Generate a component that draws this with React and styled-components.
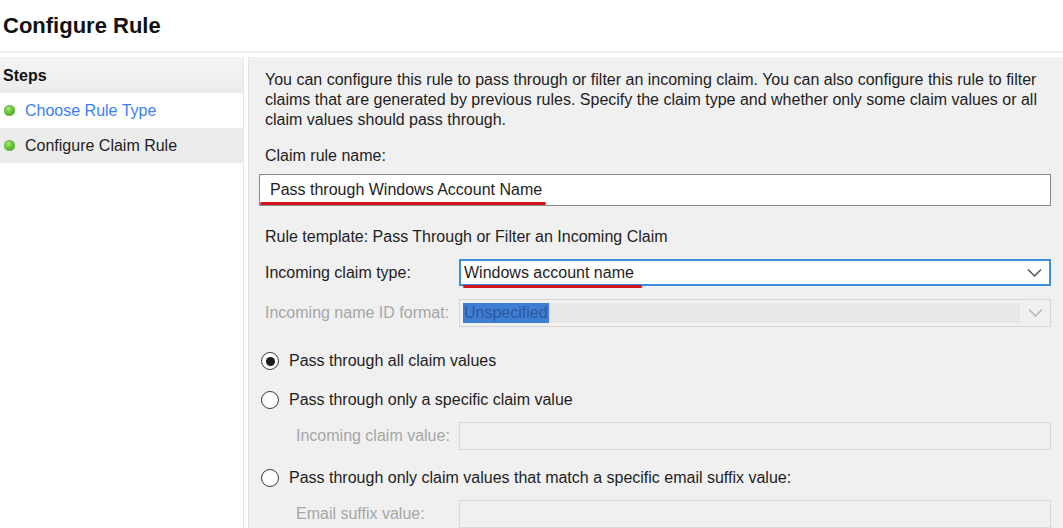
import React from "react";
import styled, { createGlobalStyle } from "styled-components";

const GlobalStyle = createGlobalStyle`
  html, body {
    margin: 0;
    padding: 0;
    background: #ffffff;
  }
  body {
    font-family: "Liberation Sans", Arial, sans-serif;
    font-size: 16px;
    color: #1e1e1e;
  }
`;

const Page = styled.div`
  width: 1063px;
  height: 528px;
  overflow: hidden;
  background: #fff;
  display: flex;
  flex-direction: column;
`;

const Header = styled.div`
  height: 53px;
  display: flex;
  align-items: center;
  padding-left: 3px;
  box-sizing: border-box;
  border-bottom: 2px solid #ececec;
`;

const Title = styled.h1`
  margin: 0;
  font-size: 22px;
  font-weight: bold;
  color: #111;
`;

const Body = styled.div`
  flex: 1;
  display: flex;
  gap: 4px;
  padding-top: 4px;
`;

const Sidebar = styled.div`
  width: 243px;
  border-right: 1px solid #e6e6e6;
  border-top: 1px solid #f2f2f2;
  display: flex;
  flex-direction: column;
`;

const StepsHeader = styled.div`
  height: 35px;
  display: flex;
  align-items: center;
  padding-left: 3px;
  font-weight: bold;
  color: #111;
  background: linear-gradient(#f4f4f4, #ececec);
`;

const StepItem = styled.div`
  height: 35px;
  display: flex;
  align-items: center;
  gap: 10px;
  padding-left: 4px;
  background: ${(p) => (p.$current ? "#ececec" : "#ffffff")};
  color: ${(p) => (p.$link ? "#3a7ff0" : "#1e1e1e")};
`;

const Dot = styled.span`
  width: 11px;
  height: 11px;
  border-radius: 50%;
  background: radial-gradient(circle at 40% 35%, #a6ec74 0%, #55b82c 55%, #3b8f1f 100%);
  box-shadow: 0 0 0 1px #78bf55 inset;
`;

const Main = styled.div`
  flex: 1;
  background: #f0f0f0;
  border-left: 1px solid #e2e2e2;
  padding: 13px 12px 0 10px;
  display: flex;
  flex-direction: column;
  line-height: 20px;
`;

const Text = styled.div`
  padding-left: 6px;
  margin-top: ${(p) => p.$mt || 0}px;
  color: ${(p) => (p.$muted ? "#a6a6a6" : "#1e1e1e")};
`;

const Underlined = styled.span`
  position: relative;
  &::after {
    content: "";
    position: absolute;
    left: ${(p) => p.$left || 0}px;
    right: ${(p) => p.$right || 0}px;
    bottom: -5px;
    height: 3px;
    border-radius: 2px;
    background: #d3131b;
  }
`;

const TextInput = styled.div`
  margin-top: ${(p) => p.$mt || 0}px;
  height: 28px;
  box-sizing: border-box;
  border: 1px solid ${(p) => (p.$disabled ? "#d9d9d9" : "#8a8a8a")};
  background: ${(p) => (p.$disabled ? "#f0f0f0" : "#ffffff")};
  display: flex;
  align-items: center;
  padding-left: 10px;
  flex: 1;
`;

const Row = styled.div`
  margin-top: ${(p) => p.$mt || 0}px;
  display: flex;
  align-items: center;
`;

const RowLabel = styled.div`
  width: ${(p) => (p.$indent ? 163 : 194)}px;
  padding-left: ${(p) => (p.$indent ? 37 : 6)}px;
  flex-shrink: 0;
  color: ${(p) => (p.$muted ? "#a6a6a6" : "#1e1e1e")};
`;

const Select = styled.div`
  flex: 1;
  height: ${(p) => (p.$disabled ? 28 : 27)}px;
  box-sizing: border-box;
  border: ${(p) => (p.$disabled ? "1px solid #d6d6d6" : "2px solid #3c8fd8")};
  background: ${(p) => (p.$disabled ? "#f0f0f0" : "#ffffff")};
  display: flex;
  align-items: center;
  padding-left: 3px;
  padding-right: 7px;
`;

const SelectValue = styled.div`
  flex: 1;
  display: flex;
  align-items: center;
  height: 100%;
  margin-right: 8px;
  box-sizing: border-box;
  ${(p) =>
    p.$disabled &&
    `
    height: 20px;
    background: #e8e8e8;
  `}
`;

const Highlight = styled.span`
  background: #3f7fd3;
  color: #2e58a0;
  padding: 0 1px;
  line-height: 20px;
`;

const Chevron = ({ color }) => (
  <svg width="15" height="10" viewBox="0 0 15 10" fill="none">
    <path d="M1 1.5 L7.5 8 L14 1.5" stroke={color} strokeWidth="1.5" />
  </svg>
);

const RadioRow = styled.label`
  margin-top: ${(p) => p.$mt || 0}px;
  display: flex;
  align-items: center;
  gap: 10px;
  padding-left: 2px;
`;

const RadioCircle = styled.span`
  width: 18px;
  height: 18px;
  box-sizing: border-box;
  border-radius: 50%;
  border: 1.5px solid #3a3a3a;
  background: #fff;
  display: flex;
  align-items: center;
  justify-content: center;
  &::after {
    content: "";
    width: 9px;
    height: 9px;
    border-radius: 50%;
    background: ${(p) => (p.$checked ? "#1a1a1a" : "transparent")};
  }
`;

export default function App() {
  return (
    <Page>
      <GlobalStyle />
      <Header>
        <Title>Configure Rule</Title>
      </Header>
      <Body>
        <Sidebar>
          <StepsHeader>Steps</StepsHeader>
          <StepItem $link>
            <Dot />
            Choose Rule Type
          </StepItem>
          <StepItem $current>
            <Dot />
            Configure Claim Rule
          </StepItem>
        </Sidebar>
        <Main>
          <Text>
            You can configure this rule to pass through or filter an incoming claim. You can also configure this rule to filter
            <br />
            claims that are generated by previous rules. Specify the claim type and whether only some claim values or all
            <br />
            claim values should pass through.
          </Text>
          <Text $mt={16}>Claim rule name:</Text>
          <TextInput $mt={8}>
            <Underlined $left={-10} $right={-4}>
              Pass through Windows Account Name
            </Underlined>
          </TextInput>
          <Text $mt={21}>Rule template: Pass Through or Filter an Incoming Claim</Text>
          <Row $mt={12}>
            <RowLabel>Incoming claim type:</RowLabel>
            <Select>
              <SelectValue>
                <Underlined $left={-1} $right={-8}>
                  Windows account name
                </Underlined>
              </SelectValue>
              <Chevron color="#555" />
            </Select>
          </Row>
          <Row $mt={13}>
            <RowLabel $muted>Incoming name ID format:</RowLabel>
            <Select $disabled>
              <SelectValue $disabled>
                <Highlight>Unspecified</Highlight>
              </SelectValue>
              <Chevron color="#b5b5b5" />
            </Select>
          </Row>
          <RadioRow $mt={24}>
            <RadioCircle $checked />
            Pass through all claim values
          </RadioRow>
          <RadioRow $mt={19}>
            <RadioCircle />
            Pass through only a specific claim value
          </RadioRow>
          <Row $mt={12}>
            <RowLabel $indent $muted>Incoming claim value:</RowLabel>
            <TextInput $disabled />
          </Row>
          <RadioRow $mt={18}>
            <RadioCircle />
            Pass through only claim values that match a specific email suffix value:
          </RadioRow>
          <Row $mt={12}>
            <RowLabel $indent $muted>Email suffix value:</RowLabel>
            <TextInput $disabled />
          </Row>
        </Main>
      </Body>
    </Page>
  );
}
